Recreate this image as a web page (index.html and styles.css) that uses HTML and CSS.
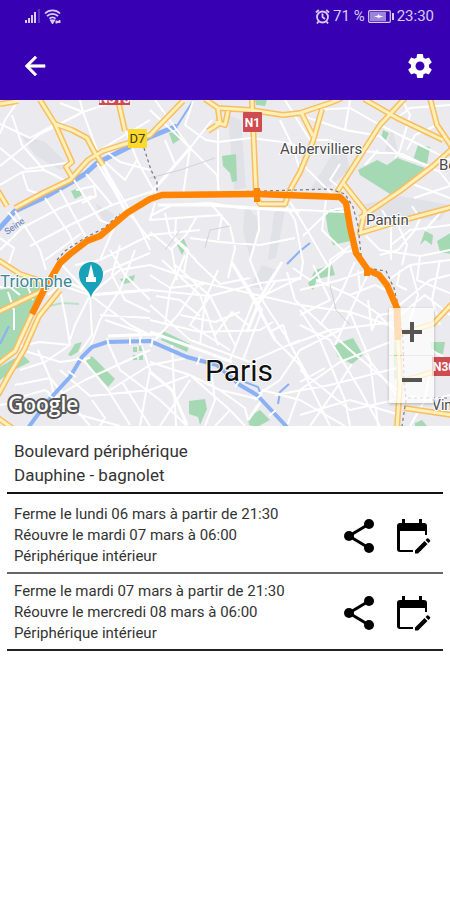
FILE: index.html
```html
<!DOCTYPE html>
<html lang="fr">
<head>
    <meta charset="UTF-8">
    <meta name="viewport" content="width=device-width, initial-scale=1.0">
    <title>Boulevard périphérique</title>
    <link rel="stylesheet" href="styles.css">
</head>
<body>
    <header>
        <div class="status-bar">
            <div class="status-group">
                <svg width="15" height="14" viewBox="0 0 15 14" fill="#d9cdf5">
                    <path d="M0 11h2v3H0zM3 9h2v5H3zM6 6h2v8H6zM9 3h2v11H9z"/>
                    <path d="M13 0h2v14h-2z" opacity=".25"/>
                </svg>
                <svg width="17" height="15" viewBox="0 0 17 15" fill="none" stroke="#d9cdf5" stroke-width="1.8">
                    <path d="M1 4.500C5 .3 12 .3 16 4.500M3 7.200C6 4 11 4 14 7.200M5.500 9.700C7 8 10 8 11.500 9.700"/>
                    <path d="M7 11.500h3l-1.500 2.500zM11.500 13h5M12.500 11.500v3M15.500 11v3"/>
                </svg>
            </div>
            <div class="status-group right">
                <svg width="15" height="15" viewBox="0 0 15 15" fill="none" stroke="#d9cdf5" stroke-width="1.800">
                    <circle cx="7.500" cy="8" r="5.500"/>
                    <path d="M7.500 4.500V8l2.500 2M1 3.500L3.800 1M14 3.500L11.200 1M3.500 12.500L2 14.500M11.500 12.500l1.500 2"/>
                </svg>
                <span>71 %</span>
                <svg width="26" height="13" viewBox="0 0 26 13">
                    <rect x=".7" y=".7" width="21.600" height="11.600" rx="1" fill="none" stroke="#d9cdf5" stroke-width="1.200"/>
                    <path d="M2 2h16v9H2z" fill="#9c83dc"/>
                    <path d="M6 6.500l4-1V4l1.500 1.500 4 1-4 1L10.500 9V7.500z" fill="#fff"/>
                    <path d="M24 3h2v7h-2z" fill="#d9cdf5"/>
                </svg>
                <span>23:30</span>
            </div>
        </div>
        <nav class="toolbar">
            <button class="icon-btn" aria-label="Retour">
                <svg width="30" height="30" viewBox="0 0 24 24" fill="#fff"><path d="M20 11H7.830l5.590-5.590L12 4l-8 8 8 8 1.410-1.410L7.830 13H20v-2z" stroke="#fff" stroke-width=".5"/></svg>
            </button>
            <button class="icon-btn" aria-label="Paramètres">
                <svg width="30" height="30" viewBox="0 0 24 24" fill="#fff"><path d="M19.140 12.940c.04-.3.060-.61.060-.94 0-.32-.02-.64-.07-.94l2.030-1.580c.18-.14.23-.41.120-.61l-1.920-3.320c-.12-.22-.37-.29-.59-.22l-2.390.96c-.5-.38-1.030-.7-1.620-.94l-.36-2.540c-.04-.24-.24-.41-.48-.41h-3.840c-.24 0-.43.17-.47.41l-.36 2.540c-.59.24-1.130.57-1.620.94l-2.390-.96c-.22-.08-.47 0-.59.22L2.740 8.870c-.12.21-.08.47.120.61l2.030 1.580c-.05.3-.09.63-.09.94s.02.64.07.94l-2.030 1.580c-.18.14-.23.41-.12.61l1.920 3.320c.12.22.37.29.59.22l2.390-.96c.5.38 1.030.7 1.620.94l.36 2.540c.05.24.24.41.48.41h3.840c.24 0 .44-.17.47-.41l.36-2.540c.59-.24 1.130-.56 1.620-.94l2.390.96c.22.08.47 0 .59-.22l1.920-3.320c.12-.22.07-.47-.12-.61l-2.010-1.580zM12 15.600c-1.980 0-3.600-1.620-3.600-3.600s1.620-3.600 3.600-3.600 3.600 1.620 3.600 3.600-1.620 3.600-3.600 3.600z"/></svg>
            </button>
        </nav>
    </header>

    <section class="map">
        <svg class="map-canvas" viewBox="0 0 450 326" preserveAspectRatio="xMidYMid slice">
            <defs>
                <path id="river" d="M-2 130L15 111 43 98 70 83 85 74 97 63 127 48 150 37 177 26"/>
                <path id="seine" d="M28 328L47 302 70 277 82 257 92 247 107 242 150 241 187 257 217 265 240 285 257 295 287 327"/>
                <g id="main-roads">
                    <path d="M40 0L55 24 72 62 66 67 72 77M55 24L72 30 87 38 95 53 103 65M15 108L43 93 70 80 88 60 103 51 128 43 150 35 183 1M118 0L125 31M-2 91L7 106M0 4L18 1"/>
                    <path d="M205 -1L218 8 250 10 283 15 300 13 330 3 342 -2M218 9L220 23 208 31M228 11L225 25 215 22M252 0L256 92M257 98L260 104 285 104 290 90 300 72 313 41 322 9M302 14L313 36"/>
                    <path d="M337 92L380 25 405 -2M364 -1L397 18 443 40M430 -2L437 25 452 47M360 118L400 91 433 66 452 49M343 83L365 111 360 133 400 121 452 107"/>
                    <path d="M-2 212L42 191M-2 160L20 174 47 183M32 214L15 251 -2 264M60 190L39 216 24 250 10 273 -2 295M-2 318L12 328M397 207L398 240 400 285 397 328M400 234L433 224 452 204M400 282L433 272M404 308L452 315"/>
                </g>
            </defs>
            <rect width="450" height="326" fill="#ebeaee"/>

            <!-- quartiers et emprises -->
            <g fill="#e1e1e8">
                <path d="M20 34L45 42 70 66 60 70 35 55zM228 15L241 20 246 88 234 90zM392 28L400 60 385 50zM360 105L400 96 450 105 440 120 370 116zM245 105L260 120 250 158 243 130zM274 113L286 105 276 158 268 160zM262 165L276 170 261 188 250 187zM335 50L345 50 350 70 325 90 310 90zM95 103L115 115 105 125z"/>
            </g>

            <!-- espaces verts -->
            <g fill="#a5d9b4">
                <path d="M358 70L377 60 387 65 397 58 425 68 397 91 390 94 360 75zM418 45L430 47 427 65 413 60zM383 30L389 33 386 40 381 38zM325 111L333 108 345 113 350 141 333 145 328 131zM420 145L425 131 433 135 432 145 425 140zM437 141L452 132V154L440 152z"/>
                <path d="M169 33L178 31 182 38 173 44zM222 56L236 54 237 81 232 82 230 73 223 66zM178 140L183 137 187 146 182 155 177 145zM255 0H267L265 6 256 5zM71 91L78 88 82 95 75 99z"/>
                <path d="M-2 190L12 188 42 178 50 185 36 209 15 247 -2 263zM22 254L30 262 10 272 -2 282V268zM68 255L75 244 82 242 78 252 71 256zM85 262L92 256 115 279 108 287zM120 179L135 175 133 182 123 184z"/>
                <path d="M163 231L190 244 187 252 161 240zM189 301L205 299 207 309 200 325 198 317 189 314zM248 317L260 310 270 320 257 327 249 325zM308 184L315 170 332 165 335 175 317 179 313 190zM333 245L353 238 363 255 352 264 338 257zM430 242L445 242 443 254 432 252zM394 242h6v37h-6zM133 247h4v5h-4zM139 246h4v5h-4zM133 255h4v5h-4zM139 255h4v5h-4zM415 323l7-3 5 6h-12z"/>
                <path d="M45 207L62 203 79 204" fill="none" stroke="#b9e2c5" stroke-width="2"/>
            </g>

            <!-- eau -->
            <g fill="none" stroke="#8ab0f5">
                <use href="#river" stroke-width="5"/>
                <path d="M177 26L193 1M0 244L9 226M245 282L258 287 260 292M278 304L280 292 289 284M287 164L300 151 310 143M409 118L420 113" stroke-width="2"/>
            </g>

            <!-- rues -->
            <g fill="none" stroke="#fff" stroke-width="2" stroke-linejoin="round">
                <path d="M0 24L30 38 55 24M0 48L26 69 72 62M0 85L22 72 44 70 64 80M12 15L22 45 44 70M0 66L40 34 83 12 120 0M18 1L5 20 0 34M22 72L28 90 43 95M60 3L83 12 97 50M83 12L80 0M95 53L150 20M103 65L140 128 150 150M97 63L127 112M72 77L100 120 113 126M45 98L70 135 76 153M60 90L88 141M15 111L40 150 46 170M0 150L22 128 60 108 92 96M22 128L8 112M30 146L70 125 112 105 150 92M45 160L82 133M0 138L14 148 8 166M126 31L137 60 150 84 158 96M104 50L120 62 150 70M137 60L125 80 105 62M86 74L112 105M76 90L94 86 96 96 82 103"/>
                <path d="M150 10L180 38 217 75 219 92M155 0L190 48 183 95M150 94L190 48 212 20M165 40L175 64M193 1L185 25 206 40 218 42 250 38 283 42 300 47M218 30L218 90M280 20L292 45 300 70M285 0L310 40 330 40 350 50M300 15L345 30 380 36M313 10L350 8 380 25M345 30L350 0M380 25L420 45 450 60M397 18L410 8 450 5M403 1L410 15 400 50 395 58M437 25L415 35 407 50M350 50L402 54 440 72M380 36L400 56 433 67M300 62L335 97M340 64L330 80 343 90M378 50L365 65M440 72L450 85M410 83L450 98M414 98L450 86"/>
                <path d="M150 116L172 105 210 103 240 108 300 110 345 112M155 103L150 120 190 117 222 115M165 113L170 135 196 160M150 132L172 150 177 180M176 117L175 138 188 150 184 172M210 103L230 126 235 148 228 178M196 118L186 135 170 150M258 100L259 130 250 160 262 190M190 138L220 142 260 145 295 138M222 115L218 140M286 106L295 120 303 162 300 180M290 102L310 135 328 166M303 136L330 110 345 108M326 100L322 130 345 152 358 150M345 152L310 180 293 168M350 146L330 160 328 185M382 110L391 125 391 160M366 136L380 150 420 156 450 150M398 125L407 145 402 165M415 130L398 150 380 155M420 156L417 180 450 193M391 145L410 130 450 125M412 106L420 118 415 130M440 113L425 130"/>
                <path d="M150 165L200 182 236 190 300 205 350 212 397 228M150 190L210 196 260 183 300 178M162 160L200 195 218 245M175 165L210 196 235 245M185 155L170 190 165 225M210 196L190 225 230 250M232 162L262 210 243 260M254 200L275 240 300 265 330 326M300 178L254 200 230 260M200 182L178 215 150 245M150 205L190 240 250 262 300 240M218 170L205 200 200 245M275 182L262 200 285 235 310 280M287 172L295 200 350 250 397 290M270 232L283 225 290 245 330 230 395 222M240 212L215 222 180 215M248 225L232 212 215 235M195 160L220 184 250 178M150 175L170 188 204 184M150 220L200 232 260 230 273 222M156 196L180 200 200 216"/>
                <path d="M90 195L105 172 150 153M90 195L120 192 150 190M90 195L130 225 150 235M90 195L92 235 80 252M90 195L75 225 70 240M90 195L60 185 48 195M90 195L62 165 72 150M90 195L120 170 150 165M68 182L85 190M110 150L125 175 150 200M120 145L112 175 125 200 150 212M135 150L120 190 100 220 90 247M60 190L66 220 70 245 40 242 20 246M22 250L60 262 90 258M70 245L45 262 20 270M100 215L150 218M105 220L140 232 142 245M75 165L100 160 150 135 200 130M100 160L115 125M128 112L150 140M82 258L108 290 130 325M60 270L90 296 150 290M47 302L85 280 150 250M15 285L50 278 90 326M38 250L50 278 60 320M10 300L45 290 80 315 120 326M108 243L120 270 160 300 187 326M110 290L150 265 187 258M122 282L150 326M150 290L190 275 220 290 262 300M172 245L176 326M150 262L190 275 230 310 245 326M142 246L150 270 140 326M210 265L215 300 205 326M92 300L105 318 100 326M0 305L30 300M20 195L10 187 0 187M8 192L14 210 14 230M25 180L33 200"/>
                <path d="M257 295L280 280 300 250 340 230M275 295L330 285 397 268M262 290L300 300 345 326M287 326L300 290 340 262 390 242M300 225L330 240 360 290 380 326M300 270L350 310 395 300M365 255L385 280 400 300M352 264L335 290 310 326M300 315L350 300 400 315M300 210L320 240 345 300 350 326M350 212L370 260 378 326M370 170L350 212 335 245M350 195L375 185 397 195M316 180L350 195 380 215 397 212M300 190L340 180 368 170M355 162L340 195 320 225M368 200L372 230 378 215 397 232M360 192L358 170M385 182L410 165 450 160M397 207L430 180 450 175M400 215L425 195 450 215M410 165L418 195 410 220M440 160L432 200 440 225M432 250L450 262M410 296L430 300 450 295M430 272L425 300 410 326M407 190L397 185 400 170M300 282L325 268M313 165L330 200 300 215M230 310L215 326M220 290L245 308 248 320M190 280L160 326"/>
            </g>
            <g fill="none" stroke="#fff" stroke-width="3">
                <path d="M103 65L127 115M150 94L190 48M254 200L232 163M247 232L262 195 282 162M254 200L275 240M158 105L210 105 300 111M90 195L150 190M248 320L262 300M150 232L200 250 232 262M108 236L160 234M187 325L172 290 150 272"/>
            </g>

            <!-- la Seine dans Paris, coupée par les ponts -->
            <use href="#seine" fill="none" stroke="#8ab0f5" stroke-width="4"/>
            <path d="M48 294l8 7M68 271l8 6M77 258l9 5M107 238l2 8M130 237v8M140 237v8M153 238l-2 9M200 256l-3 9M240 280l-5 7M262 294l-7 6M276 310l-7 6" fill="none" stroke="#fff" stroke-width="2"/>

            <!-- voies ferrées -->
            <g fill="none" stroke="#d2d2d9" stroke-width="1">
                <path d="M150 78L180 70 215 58M205 148L210 130 230 126M330 185L336 210 350 225M165 150L180 130"/>
            </g>

            <!-- grands axes -->
            <g fill="none" stroke-linejoin="round">
                <use href="#main-roads" stroke="#f9bd62" stroke-width="6"/>
                <use href="#main-roads" stroke="#fff0b5" stroke-width="3"/>
            </g>

            <!-- limite communale -->
            <path d="M57 160L65 151 83 139 104 128 120 114M144 48L151 70 157 82 157 94M162 95L230 92 330 89 345 94 353 107 358 125 361 155 366 168 386 171 394 188 398 205 403 240 404 280 406 300 402 326M408 298H450" fill="none" stroke="#77777c" stroke-width="1.200" stroke-dasharray="3 3"/>

            <!-- tronçon fermé -->
            <path d="M32 214L43 192 60 163 70 154 87 141 100 136 127 113 150 99 162 95 257 94 340 97 346 103 350 127 356 153 368 170 379 175 387 185 397 208" fill="none" stroke="#ff8500" stroke-width="6.500" stroke-linejoin="round"/>
            <path d="M397 207L398 240" fill="none" stroke="#ff8500" stroke-width="7"/>
            <path d="M257 88v14M367 168v8" fill="none" stroke="#ff8500" stroke-width="6"/>

            <!-- cartouches et repère -->
            <g class="road-sign">
                <rect x="99" y="-12" width="31" height="17" fill="#cf4b50"/>
                <text x="114.500" y="3" font-size="13" fill="#fff" text-anchor="middle">N315</text>
                <rect x="128" y="29" width="19" height="19" rx="1" fill="#fbd92d"/>
                <text x="137.500" y="43" font-size="13" fill="#423b18" text-anchor="middle" class="local">D7</text>
                <rect x="243" y="12" width="19" height="20" rx="1" fill="#cf4b50"/>
                <text x="252.500" y="27" font-size="12" fill="#fff" text-anchor="middle">N1</text>
                <rect x="432" y="257" width="25" height="19" fill="#cf4b50"/>
                <text x="433" y="271" font-size="12" fill="#fff">N30</text>
            </g>
            <path d="M91 198C89 188 79 186 79 174a12 12 0 0 1 24 0C103 186 93 188 91 198z" fill="#16a2b8"/>
            <path d="M91 164l2 8 1 5h2v5H86v-5h2l1-5z" fill="#fff"/>

            <!-- noms des lieux -->
            <g class="place">
                <text x="280" y="54" font-size="15">Aubervilliers</text>
                <text x="366" y="125" font-size="15">Pantin</text>
                <text x="439" y="70" font-size="15">Bo</text>
                <text x="432" y="310" font-size="14">Vin</text>
                <text x="205" y="281" font-size="30" class="city">Paris</text>
                <text x="0" y="187" font-size="17" class="landmark">Triomphe</text>
                <text x="7" y="135" font-size="9" transform="rotate(-34 7 135)" class="water">Seine</text>
            </g>
            <text x="8" y="312" font-size="21" class="brand">Google</text>
        </svg>
        <div class="zoom-controls">
            <button class="zoom-btn" aria-label="Zoom avant">
                <svg width="22" height="22" viewBox="0 0 22 22" fill="#555"><path d="M9 1h4v8h8v4h-8v8H9v-8H1V9h8z"/></svg>
            </button>
            <button class="zoom-btn" aria-label="Zoom arrière">
                <svg width="22" height="22" viewBox="0 0 22 22" fill="#555"><path d="M1 9h20v4H1z"/></svg>
            </button>
        </div>
    </section>

    <main>
        <h1>Boulevard périphérique<br>Dauphine - bagnolet</h1>

        <article class="closure first">
            <p>Ferme le lundi 06 mars à partir de 21:30<br>
            Réouvre le mardi 07 mars à 06:00<br>
            Périphérique intérieur</p>
            <div class="actions">
                <button class="icon-btn" aria-label="Partager">
                    <svg width="40" height="40" viewBox="0 0 40 40"><path d="M30 8L10 20l20 12" fill="none" stroke="#000" stroke-width="3"/><circle cx="30" cy="8" r="5"/><circle cx="10" cy="20" r="5"/><circle cx="30" cy="32" r="5"/></svg>
                </button>
                <button class="icon-btn" aria-label="Ajouter au calendrier">
                    <svg width="40" height="40" viewBox="0 0 40 40"><path d="M9 3h3v4h14V3h3v4h2q3 0 3 3v9h-2v-4H7v19h13v2H7q-3 0-3-3V10q0-3 3-3h2z"/><path d="M22 34.500L31.500 25l3 3L25 37.500h-3zM32.500 24l1.500-1.500q.7-.6 1.400 0l1.600 1.600q.6.7 0 1.400L35.500 27z"/></svg>
                </button>
            </div>
        </article>

        <article class="closure">
            <p>Ferme le mardi 07 mars à partir de 21:30<br>
            Réouvre le mercredi 08 mars à 06:00<br>
            Périphérique intérieur</p>
            <div class="actions">
                <button class="icon-btn" aria-label="Partager">
                    <svg width="40" height="40" viewBox="0 0 40 40"><path d="M30 8L10 20l20 12" fill="none" stroke="#000" stroke-width="3"/><circle cx="30" cy="8" r="5"/><circle cx="10" cy="20" r="5"/><circle cx="30" cy="32" r="5"/></svg>
                </button>
                <button class="icon-btn" aria-label="Ajouter au calendrier">
                    <svg width="40" height="40" viewBox="0 0 40 40"><path d="M9 3h3v4h14V3h3v4h2q3 0 3 3v9h-2v-4H7v19h13v2H7q-3 0-3-3V10q0-3 3-3h2z"/><path d="M22 34.500L31.500 25l3 3L25 37.500h-3zM32.500 24l1.500-1.500q.7-.6 1.400 0l1.600 1.600q.6.7 0 1.400L35.500 27z"/></svg>
                </button>
            </div>
        </article>
    </main>
</body>
</html>
```
FILE: styles.css
```css
/* Reset et Base */
* {
    margin: 0;
    padding: 0;
    box-sizing: border-box;
}

body {
    background: #fff;
    color: #333;
    font-family: Roboto, 'Liberation Sans', sans-serif;
}

svg {
    display: block;
}

button {
    background: none;
    border: none;
    cursor: pointer;
}

/* En-tête */
header {
    background: #3700b3;
    color: #d9cdf5;
}

.status-bar {
    height: 32px;
    padding: 0 16px 0 25px;
    display: flex;
    align-items: center;
    justify-content: space-between;
    font-size: 15px;
}

.status-group {
    display: flex;
    align-items: center;
    gap: 4px;
}

.status-group.right {
    gap: 3px;
}

.toolbar {
    height: 68px;
    padding: 0 15px 0 20px;
    display: flex;
    align-items: center;
    justify-content: space-between;
}

/* Carte */
.map {
    position: relative;
    overflow: hidden;
}

.map-canvas {
    width: 100%;
    height: auto;
}

.road-sign {
    font-weight: 700;
}

.road-sign .local {
    font-weight: 400;
}

.place {
    fill: #4a4a4e;
    stroke: #fff;
    stroke-width: 2px;
    paint-order: stroke;
}

.place .city {
    fill: #111;
}

.place .landmark {
    fill: #3c8796;
}

.place .water {
    fill: #6078b8;
    stroke: none;
}

.brand {
    font-family: 'Open Sans', Roboto, sans-serif;
    font-weight: 600;
    fill: #fff;
    stroke: #555;
    stroke-width: 4px;
    stroke-linejoin: round;
    paint-order: stroke;
}

.zoom-controls {
    position: absolute;
    right: 16px;
    bottom: 23px;
    display: grid;
    gap: 1px;
    box-shadow: 0 1px 3px rgba(0, 0, 0, 0.25);
}

.zoom-btn {
    width: 45px;
    height: 47px;
    display: grid;
    place-items: center;
    background: rgba(255, 255, 255, 0.72);
}

/* Liste des fermetures */
main {
    padding: 0 7px;
}

h1 {
    padding: 13px 7px 5px;
    border-bottom: 2px solid #111;
    font-size: 17px;
    font-weight: 400;
    line-height: 24px;
}

.closure {
    padding: 7px 7px 5px;
    border-bottom: 2px solid #222;
    display: flex;
    align-items: center;
    justify-content: space-between;
    font-size: 15px;
    line-height: 21px;
}

.closure.first {
    padding-top: 10px;
    border-color: #666;
}

.actions {
    padding-right: 3px;
    display: flex;
    gap: 14px;
}
```
